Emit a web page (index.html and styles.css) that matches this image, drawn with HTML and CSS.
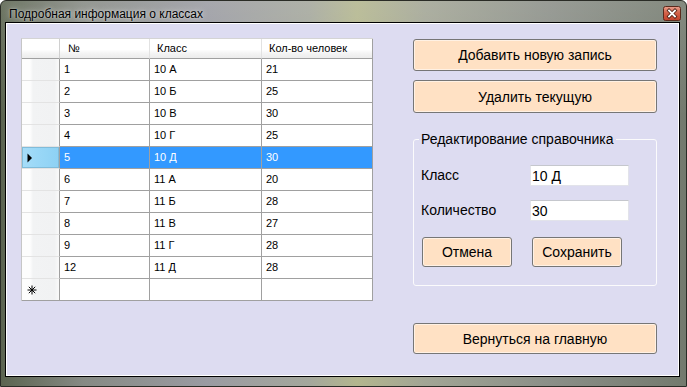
FILE: index.html
```html
<!DOCTYPE html>
<html lang="ru">
<head>
    <meta charset="UTF-8">
    <title>Подробная информация о классах</title>
    <link rel="stylesheet" href="styles.css">
</head>
<body>
    <div class="window">
        <div class="titlebar">
            <span class="title">Подробная информация о классах</span>
            <button class="close" title="Закрыть">
                <svg width="18" height="15" viewBox="0 0 18 15">
                    <defs>
                        <linearGradient id="closeBg" x1="0" y1="0" x2="0" y2="1">
                            <stop offset="0" stop-color="#e9a18f"/>
                            <stop offset="0.45" stop-color="#d4634a"/>
                            <stop offset="1" stop-color="#c2402a"/>
                        </linearGradient>
                    </defs>
                    <rect x="0.5" y="0.5" width="17" height="14" rx="2" fill="url(#closeBg)" stroke="#5b2a1c"/>
                    <path d="M6 4.5 L12 10.5 M12 4.5 L6 10.5" stroke="#4a1d12" stroke-width="3.4" stroke-linecap="square"/>
                    <path d="M6 4.5 L12 10.5 M12 4.5 L6 10.5" stroke="#fff" stroke-width="1.8" stroke-linecap="square"/>
                </svg>
            </button>
        </div>

        <div class="client">
            <div class="dgv">
                <div class="row head">
                    <div class="cell rowhead"></div>
                    <div class="cell col-num">№</div>
                    <div class="cell col-class">Класс</div>
                    <div class="cell col-qty">Кол-во человек</div>
                </div>
                <div class="row">
                    <div class="cell rowhead"></div>
                    <div class="cell col-num">1</div>
                    <div class="cell col-class">10 А</div>
                    <div class="cell col-qty">21</div>
                </div>
                <div class="row">
                    <div class="cell rowhead"></div>
                    <div class="cell col-num">2</div>
                    <div class="cell col-class">10 Б</div>
                    <div class="cell col-qty">25</div>
                </div>
                <div class="row">
                    <div class="cell rowhead"></div>
                    <div class="cell col-num">3</div>
                    <div class="cell col-class">10 В</div>
                    <div class="cell col-qty">30</div>
                </div>
                <div class="row">
                    <div class="cell rowhead"></div>
                    <div class="cell col-num">4</div>
                    <div class="cell col-class">10 Г</div>
                    <div class="cell col-qty">25</div>
                </div>
                <div class="row selected">
                    <div class="cell rowhead">
                        <svg width="6" height="10" viewBox="0 0 6 10"><path d="M0.5 0.5 L5 5 L0.5 9.5 Z" fill="#000"/></svg>
                    </div>
                    <div class="cell col-num">5</div>
                    <div class="cell col-class">10 Д</div>
                    <div class="cell col-qty">30</div>
                </div>
                <div class="row">
                    <div class="cell rowhead"></div>
                    <div class="cell col-num">6</div>
                    <div class="cell col-class">11 А</div>
                    <div class="cell col-qty">20</div>
                </div>
                <div class="row">
                    <div class="cell rowhead"></div>
                    <div class="cell col-num">7</div>
                    <div class="cell col-class">11 Б</div>
                    <div class="cell col-qty">28</div>
                </div>
                <div class="row">
                    <div class="cell rowhead"></div>
                    <div class="cell col-num">8</div>
                    <div class="cell col-class">11 В</div>
                    <div class="cell col-qty">27</div>
                </div>
                <div class="row">
                    <div class="cell rowhead"></div>
                    <div class="cell col-num">9</div>
                    <div class="cell col-class">11 Г</div>
                    <div class="cell col-qty">28</div>
                </div>
                <div class="row">
                    <div class="cell rowhead"></div>
                    <div class="cell col-num">12</div>
                    <div class="cell col-class">11 Д</div>
                    <div class="cell col-qty">28</div>
                </div>
                <div class="row">
                    <div class="cell rowhead">
                        <svg width="10" height="10" viewBox="0 0 10 10">
                            <path d="M5 0.5 V9.5 M0.5 5 H9.5 M1.8 1.8 L8.2 8.2 M8.2 1.8 L1.8 8.2" stroke="#000" stroke-width="1"/>
                        </svg>
                    </div>
                    <div class="cell col-num"></div>
                    <div class="cell col-class"></div>
                    <div class="cell col-qty"></div>
                </div>
            </div>

            <div class="panel">
                <button class="btn btn-wide">Добавить новую запись</button>
                <button class="btn btn-wide btn-delete">Удалить текущую</button>

                <fieldset class="group">
                    <legend>Редактирование справочника</legend>
                    <div class="field field-first">
                        <label for="className">Класс</label>
                        <input type="text" id="className" value="10 Д">
                    </div>
                    <div class="field field-second">
                        <label for="count">Количество</label>
                        <input type="text" id="count" value="30">
                    </div>
                    <div class="actions">
                        <button class="btn btn-small">Отмена</button>
                        <button class="btn btn-small">Сохранить</button>
                    </div>
                </fieldset>

                <button class="btn btn-wide btn-back">Вернуться на главную</button>
            </div>
        </div>
    </div>
</body>
</html>
```

FILE: styles.css
```css
body {
    margin: 0;
    padding: 0;
    width: 687px;
    height: 387px;
    overflow: hidden;
    font-family: "Liberation Sans", Arial, sans-serif;
}

.window {
    box-sizing: border-box;
    width: 687px;
    height: 387px;
    display: flex;
    flex-direction: column;
    padding: 0 6px 9px 4px;
    border: 1px solid #2a2c26;
    border-radius: 6px 6px 0 0;
    background:
        linear-gradient(to bottom, rgba(255, 255, 255, 0.12), rgba(0, 0, 0, 0) 30%),
        linear-gradient(to right, #5b6450 0%, #868a84 12%, #9a9ba2 30%, #a4a79c 45%, #b3b68e 52%, #a2a595 62%, #8b8f88 80%, #737a6e 100%);
}

.titlebar {
    height: 21px;
    display: flex;
    align-items: center;
    justify-content: space-between;
    padding-left: 4px;
}

.title {
    font-size: 12px;
    color: #000;
    text-shadow: 0 0 6px rgba(255, 255, 255, 0.7), 0 0 2px rgba(255, 255, 255, 0.5);
    margin-top: 4px;
}

.close {
    border: none;
    background: none;
    padding: 0;
    margin: 3px -1px 0 0;
    width: 18px;
    height: 15px;
    display: block;
}

.close svg {
    display: block;
}

.client {
    flex: 1;
    display: flex;
    gap: 40px;
    padding: 15px 0 0 15px;
    border: 1px solid #000;
    box-shadow: inset 0 0 0 1px #fff;
    background: #dddcf1;
}

/* data grid */
.dgv {
    width: 352px;
    align-self: flex-start;
    border-left: 1px solid #c6c6c6;
    border-top: 1px solid #d4d4d4;
    box-sizing: border-box;
    background: #fff;
    font-size: 11px;
    color: #000;
}

.row {
    display: flex;
    height: 22px;
}

.row.head {
    height: 20px;
}

.cell {
    box-sizing: border-box;
    border-right: 1px solid #a0a0a0;
    border-bottom: 1px solid #a0a0a0;
    padding-left: 4px;
    line-height: 21px;
    white-space: nowrap;
    overflow: hidden;
}

.rowhead {
    width: 38px;
    padding-left: 5px;
    display: flex;
    align-items: center;
    border-bottom-color: #e3e3e3;
    background: linear-gradient(to right, #fdfdfd 0%, #fdfdfd 22%, #f2f3f4 30%, #f1f2f3 88%, #fafafa 100%);
}

.rowhead svg {
    display: block;
}

.col-num {
    width: 90px;
}

.col-class {
    width: 112px;
}

.col-qty {
    width: 111px;
}

.head .cell {
    line-height: 19px;
    padding-left: 7px;
    border-right-color: #e2e2e2;
    background: linear-gradient(to bottom, #ffffff 0%, #ffffff 55%, #f4f4f4 75%, #ececec 100%);
}

.head .col-num {
    padding-left: 8px;
}

.head .col-qty {
    border-right-color: #a0a0a0;
}

.head .rowhead {
    border-right-color: #d0d0d0;
    border-bottom-color: #a0a0a0;
}

.row:last-child .rowhead {
    border-bottom-color: #a0a0a0;
}

.selected .cell {
    background: #3399ff;
    color: #fff;
}

.selected .rowhead {
    background: linear-gradient(to right, #a7ddf8 0%, #9ad8f7 40%, #8dd1f4 100%);
    box-shadow: inset 0 0 0 1px #80bcda;
}

/* right panel */
.panel {
    width: 244px;
    display: flex;
    flex-direction: column;
    padding-top: 1px;
    font-size: 14px;
}

.btn {
    box-sizing: border-box;
    font-family: "Liberation Sans", Arial, sans-serif;
    font-size: 14px;
    color: #000;
    background: #ffe1c4;
    border: 1px solid #767676;
    border-radius: 3px;
    box-shadow: inset 0 0 0 1px rgba(255, 255, 255, 0.55);
    padding: 0;
    cursor: pointer;
}

.btn-wide {
    width: 244px;
    height: 32px;
}

.btn-delete {
    margin-top: 9px;
    height: 33px;
}

.btn-back {
    margin-top: 37px;
    height: 31px;
}

.group {
    margin: 19px 0 0 0;
    padding: 0 0 18px 7px;
    border: 1px solid #fbfbfc;
    border-radius: 3px;
    min-inline-size: 0;
}

.group legend {
    padding: 0 2px;
    margin-left: -2px;
    font-size: 14px;
    line-height: 15px;
    color: #000;
}

.field {
    display: flex;
    align-items: center;
    height: 21px;
}

.field-first {
    margin-top: 18px;
}

.field-second {
    margin-top: 14px;
}

.field label {
    width: 109px;
    margin-top: -2px;
}

.field input {
    box-sizing: border-box;
    width: 99px;
    height: 21px;
    padding: 0 1px;
    font-family: "Liberation Sans", Arial, sans-serif;
    font-size: 14px;
    color: #000;
    background: #fff;
    border: 1px solid #e2e3ea;
    border-top-color: #c5c7cd;
    outline: none;
}

.actions {
    display: flex;
    gap: 20px;
    margin-top: 16px;
    padding-left: 1px;
}

.btn-small {
    width: 90px;
    height: 30px;
}
```
